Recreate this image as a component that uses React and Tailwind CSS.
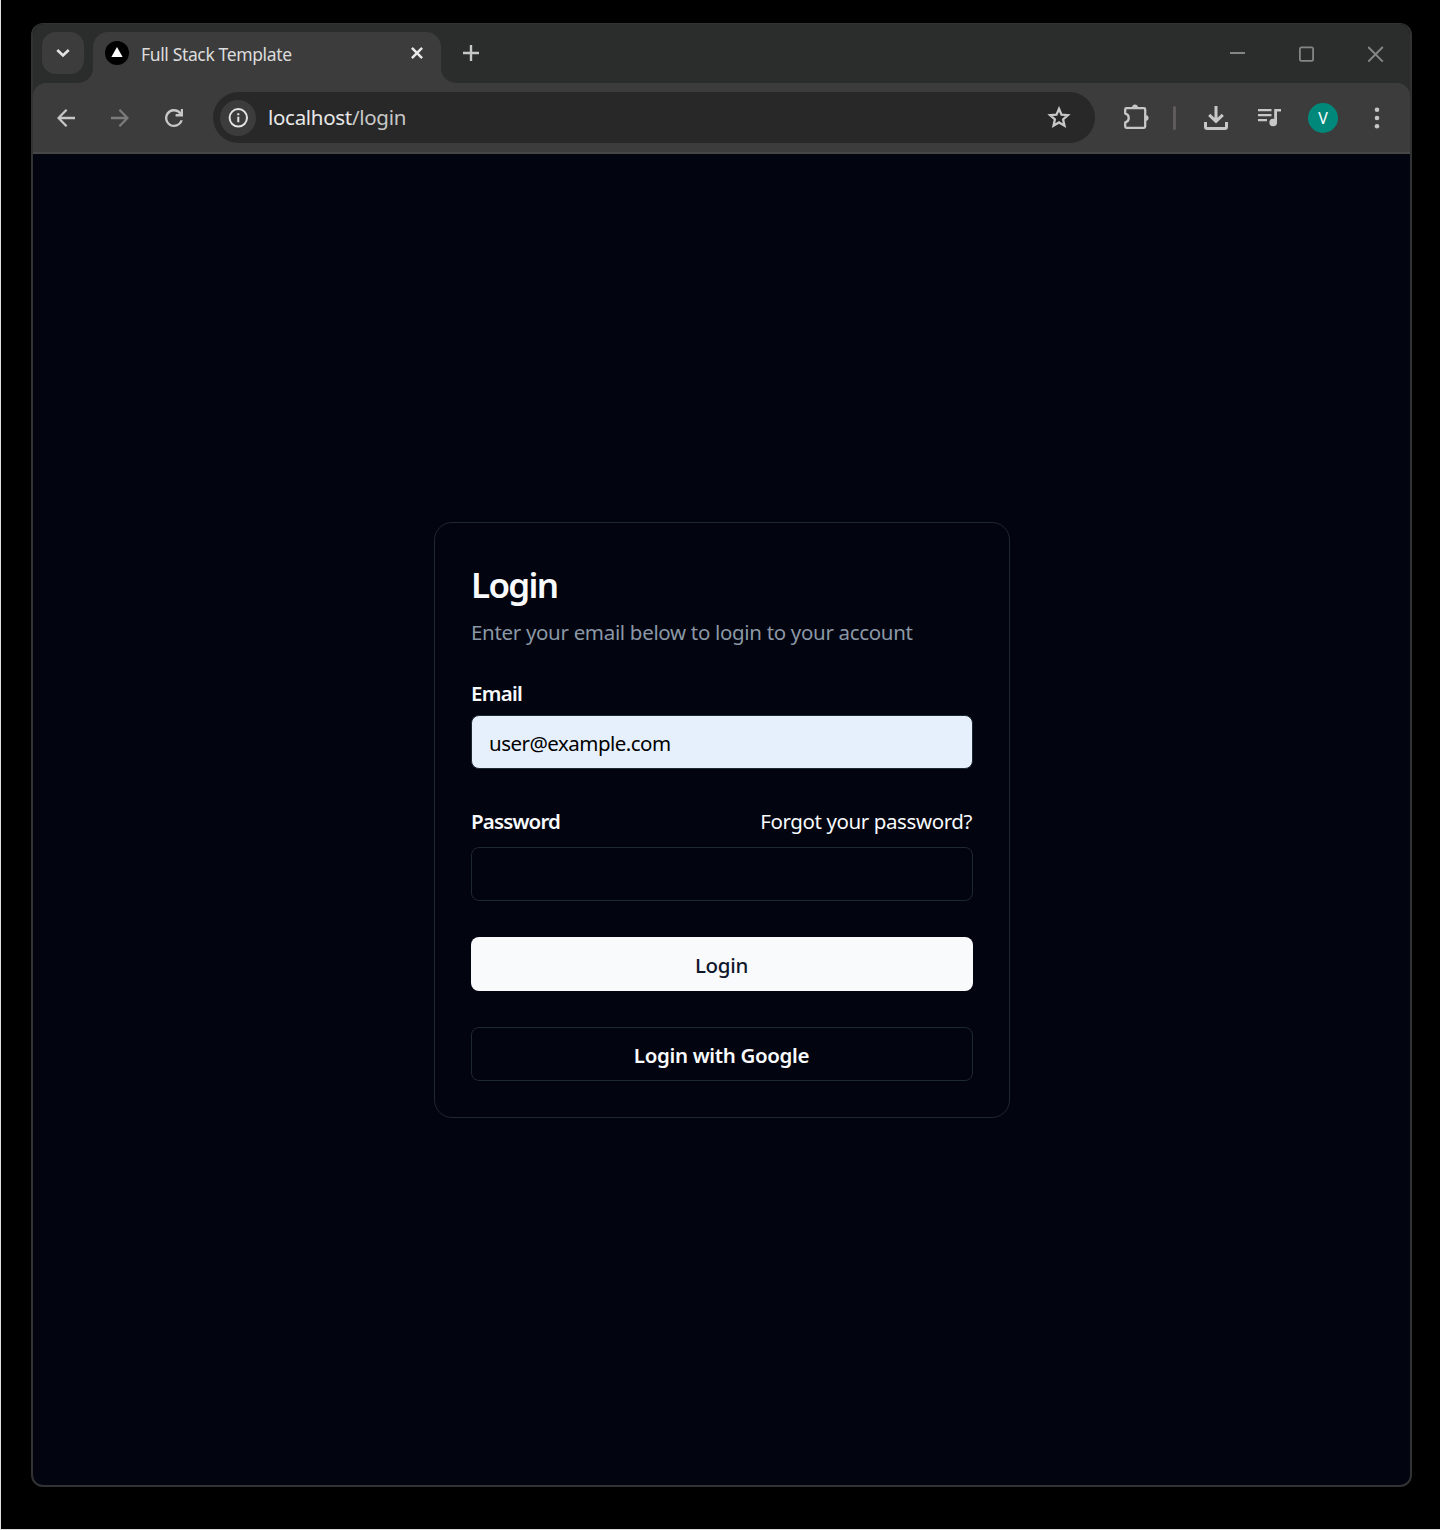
import React from "react";

const stroke = { fill: "none", stroke: "currentColor" };

function TitleBar() {
  return (
    <div className="flex h-[59px] items-start bg-[#2b2d2c] pl-[9px]">
      <button className="mt-2 flex size-[42px] items-center justify-center rounded-[14px] bg-[#3c3c3c] text-[#e3e3e3]">
        <svg width="14" height="10" viewBox="0 0 14 10" {...stroke} strokeWidth="2.6">
          <path d="M1.3 2L7 7.5L12.7 2" />
        </svg>
      </button>
      <div className="relative mt-2 ml-[9px] flex h-[51px] w-[348px] rounded-t-[15px] bg-[#3c3c3c]">
        <svg className="absolute bottom-0 -left-[15px] text-[#3c3c3c]" width="15" height="15" viewBox="0 0 15 15">
          <path d="M15 0V15H0A15 15 0 0 0 15 0Z" fill="currentColor" />
        </svg>
        <svg className="absolute -right-[15px] bottom-0 text-[#3c3c3c]" width="15" height="15" viewBox="0 0 15 15">
          <path d="M0 0V15H15A15 15 0 0 1 0 0Z" fill="currentColor" />
        </svg>
        <svg className="mt-[9px] ml-3 shrink-0" width="24" height="24" viewBox="0 0 24 24">
          <circle cx="12" cy="12" r="12" fill="#000" />
          <path d="M12 6L17.6 16H6.4Z" fill="#fff" />
        </svg>
        <span className="ml-3 w-[270px] shrink-0 text-[17.5px] leading-[44px] tracking-[-0.36px] whitespace-nowrap text-[#dcdcdc]">
          Full Stack Template
        </span>
        <svg className="mt-[15px] shrink-0 text-[#e8e8e8]" width="12" height="12" viewBox="0 0 12 12" {...stroke} strokeWidth="2.5">
          <path d="M.9 .9L11.1 11.1M11.1 .9L.9 11.1" />
        </svg>
      </div>
      <svg className="mt-[21px] ml-[22px] text-[#c7c7c7]" width="16" height="16" viewBox="0 0 16 16" {...stroke} strokeWidth="2.4">
        <path d="M8 0V16M0 8H16" />
      </svg>
      <div className="ml-auto flex gap-[54px] pt-[22px] pr-[26px] text-[#858585]">
        <svg width="15" height="16" viewBox="0 0 15 16" {...stroke} strokeWidth="2">
          <path d="M0 7H15" />
        </svg>
        <svg width="15" height="16" viewBox="0 0 15 16" {...stroke} strokeWidth="1.8">
          <rect x=".9" y="1.4" width="13.2" height="13.4" rx="1.6" />
        </svg>
        <svg width="16" height="16" viewBox="0 0 16 16" {...stroke} strokeWidth="2">
          <path d="M.2 1L14.8 15.6M14.8 1L.2 15.6" />
        </svg>
      </div>
    </div>
  );
}

function Toolbar() {
  return (
    <div className="bg-[#2b2d2c]">
      <div className="flex h-[71px] items-center rounded-t-[13px] border-b-2 border-[#474747] bg-[#3c3c3c] pl-6 text-[#c7c7c7]">
        <svg className="mt-px" width="18" height="18" viewBox="0 0 18 18" {...stroke} strokeWidth="2.3">
          <path d="M18 9H1.7M9.6 .8L1.5 9L9.6 17.2" />
        </svg>
        <svg className="mt-px ml-9 text-[#7c7c7c]" width="18" height="18" viewBox="0 0 18 18" {...stroke} strokeWidth="2.3">
          <path d="M0 9H16.3M8.4 .8L16.5 9L8.4 17.2" />
        </svg>
        <svg className="mt-px ml-9" width="18" height="18" viewBox="0 0 18 18">
          <path
            d="M9 18A9 9 0 1 1 15.8 3.1V0H18V7.4H10.6V5.1H14.4A6.7 6.7 0 1 0 15.4 11.2H17.8A9 9 0 0 1 9 18Z"
            fill="currentColor"
          />
        </svg>
        <div className="ml-[30px] flex h-[51px] w-[882px] items-center rounded-full bg-[#282828] pr-6 pl-[7px]">
          <div className="flex size-9 items-center justify-center rounded-full bg-[#3c3c3c] text-[#e3e3e3]">
            <svg width="20" height="20" viewBox="0 0 20 20" {...stroke} strokeWidth="2">
              <circle cx="10.3" cy="9.8" r="8.7" />
              <path d="M10.3 8.8V14.3M10.3 5.2V7.2" />
            </svg>
          </div>
          <span className="ml-3 text-[20.5px] leading-[49px] tracking-[-0.3px] text-[#c7c7c7]">
            <span className="text-[#e8e8e8]">localhost</span>/login
          </span>
          <svg className="ml-auto" width="24" height="23" viewBox="0 0 24 23" {...stroke} strokeWidth="2.3">
            <path d="M12 2.8L14.5 8.6L20.9 9.2L16.1 13.4L17.5 19.7L12 16.4L6.5 19.7L7.9 13.4L3.1 9.2L9.5 8.6Z" />
          </svg>
        </div>
        <svg className="-mt-[2px] ml-7" width="27" height="27" viewBox="0 0 27 27" {...stroke} strokeWidth="2.3">
          <path
            d="M3.4 5.2H21Q22.2 5.2 22.2 6.4V23.6Q22.2 24.8 21 24.8H3.4Q2.2 24.8 2.2 23.6V19.4A4.5 4.5 0 0 0 2.2 10.6V6.4Q2.2 5.2 3.4 5.2Z"
            strokeLinejoin="round"
          />
          <path d="M9 5A3 3.6 0 0 1 15 5ZM22 12A3.6 3 0 0 1 22 18Z" fill="currentColor" stroke="none" />
        </svg>
        <span className="mt-px ml-[23px] h-6 w-[3px] rounded-full bg-[#5f5b5c]" />
        <svg className="mt-px ml-7" width="24" height="24" viewBox="0 0 24 24" {...stroke} strokeWidth="3">
          <path d="M12 0V15M5.2 8.8L12 15.3L18.8 8.8" />
          <path d="M1.5 16V20.7Q1.5 22.5 3.3 22.5H20.7Q22.5 22.5 22.5 20.7V16" />
        </svg>
        <svg className="mt-px ml-[30px]" width="23" height="18" viewBox="0 0 23 18" {...stroke} strokeWidth="2.2">
          <path d="M0 1.2H13.5M0 6.2H13.5M0 11.2H9" />
          <circle cx="15.2" cy="13.5" r="3.8" fill="currentColor" stroke="none" />
          <path d="M16.2 0H23V2.4H19V14H16.2Z" fill="currentColor" stroke="none" />
        </svg>
        <div className="mt-px ml-[27px] flex size-[30px] items-center justify-center rounded-full bg-[#00897b] text-base leading-none text-white">
          V
        </div>
        <svg className="mt-px ml-9" width="6" height="22" viewBox="0 0 6 22" fill="currentColor">
          <circle cx="3" cy="2.8" r="2.3" />
          <circle cx="3" cy="11" r="2.3" />
          <circle cx="3" cy="19.2" r="2.3" />
        </svg>
      </div>
    </div>
  );
}

function LoginCard() {
  return (
    <form className="mt-[368px] flex h-[596px] w-[576px] flex-col rounded-[18px] border border-[#1e2833] p-9 text-[20.5px] text-[#f8fafc]">
      <h1 className="text-[35px] leading-[52px] font-semibold tracking-[-1.7px]">Login</h1>
      <p className="leading-[42px] tracking-[-0.32px] whitespace-nowrap text-[#8b98a5]">
        Enter your email below to login to your account
      </p>
      <label className="mt-[18px] leading-[44px] font-semibold tracking-[-0.7px]">Email</label>
      <div className="h-[54px] rounded-lg border border-[#1e2833] bg-[#e6f0fd] pt-px pl-[17px] leading-[52px] tracking-[-0.52px] text-black">
        user@example.com
      </div>
      <div className="mt-[26px] flex justify-between leading-[52px] tracking-[-0.4px]">
        <span className="font-semibold tracking-[-0.85px]">Password</span>
        <a className="pr-px">Forgot your password?</a>
      </div>
      <div className="h-[54px] rounded-lg border border-[#1e2833]" />
      <button className="mt-9 h-[54px] rounded-lg bg-[#f8fafc] pt-[2px] pr-px font-medium tracking-[-0.3px] text-[#0f172a]">
        Login
      </button>
      <button className="mt-9 h-[54px] rounded-lg border border-[#1e2833] pt-[2px] pr-px font-semibold tracking-[-0.35px]">
        Login with Google
      </button>
    </form>
  );
}

export default function App() {
  return (
    <div className="h-[1530px] w-[1440px] border-b border-l border-[#dedede] bg-black pt-[23px] pl-[30px] font-['Noto_Sans',sans-serif]">
      <div className="flex h-[1464px] w-[1381px] flex-col overflow-hidden rounded-xl border-x-2 border-t border-b-2 border-[#323232] bg-[#020410]">
        <TitleBar />
        <Toolbar />
        <main className="flex flex-1 flex-col items-center pl-px">
          <LoginCard />
        </main>
      </div>
    </div>
  );
}
